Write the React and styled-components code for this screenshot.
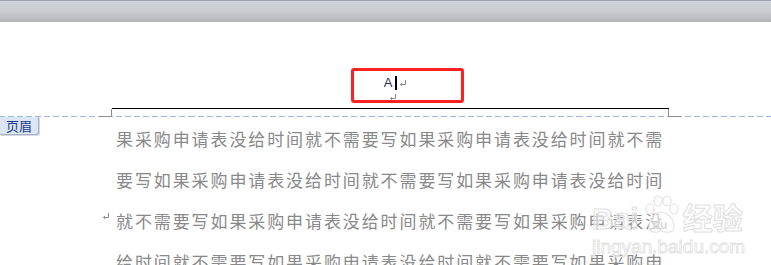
import React from "react";
import styled, { createGlobalStyle } from "styled-components";

const GlobalStyle = createGlobalStyle`
  html, body {
    margin: 0;
    padding: 0;
    background: #ffffff;
    overflow: hidden;
  }
  body {
    font-family: "Noto Sans CJK SC", "Liberation Sans", sans-serif;
  }
`;

const lines = [
  "果采购申请表没给时间就不需要写如果采购申请表没给时间就不需",
  "要写如果采购申请表没给时间就不需要写如果采购申请表没给时间",
  "就不需要写如果采购申请表没给时间就不需要写如果采购申请表没",
  "给时间就不需要写如果采购申请表没给时间就不需要写如果采购申",
];

const ReturnMark = ({ color = "#8a8a8a" }) => (
  <svg width="8" height="7" viewBox="0 0 8 7">
    <path d="M6.5 0 V4.5 H1.5" fill="none" stroke={color} strokeWidth="1" />
    <path d="M1 4.5 L3 2.8 V6.2 Z" fill={color} />
  </svg>
);

const App = () => {
  return (
    <>
      <GlobalStyle />
      <Page>
        <TopBar />
        <HeaderZone>
          <HeaderBox>
            <HeaderLine>
              <HeaderChar>A</HeaderChar>
              <Caret />
              <ReturnMark />
            </HeaderLine>
            <HeaderLine>
              <ReturnMark />
            </HeaderLine>
          </HeaderBox>
          <Highlight />
        </HeaderZone>
        <Divider>
          <CornerTick $side="left" />
          <CornerTick $side="right" />
        </Divider>
        <Body>
          <HeaderTag>页眉</HeaderTag>
          {lines.map((text, i) => (
            <Line key={i}>
              <Gutter>{i === 2 && <ReturnMark />}</Gutter>
              <LineText>{text}</LineText>
            </Line>
          ))}
          <Watermark>
            <LogoRow>
              <LogoWord>Bai</LogoWord>
              <Paw>
                <svg width="40" height="40" viewBox="0 0 40 40">
                  <g fill="rgba(255,255,255,0.55)" stroke="#e3e3e3" strokeWidth="1.2">
                    <ellipse cx="9" cy="14" rx="4" ry="5" />
                    <ellipse cx="17" cy="6" rx="4" ry="5" />
                    <ellipse cx="26" cy="6" rx="4" ry="5" />
                    <ellipse cx="33" cy="14" rx="4" ry="5" />
                    <path d="M8 32 C8 22 16 17 20 17 C25 17 33 22 33 32 C33 38 26 38 20 36 C14 38 8 38 8 32 Z" />
                  </g>
                </svg>
                <PawText>du</PawText>
              </Paw>
              <LogoWord>经验</LogoWord>
            </LogoRow>
            <LogoUrl>jingyan.baidu.com</LogoUrl>
          </Watermark>
        </Body>
      </Page>
    </>
  );
};

const Page = styled.div`
  width: 771px;
  height: 265px;
  overflow: hidden;
  background: #ffffff;
`;

const TopBar = styled.div`
  height: 21px;
  border-top: 1px solid #9aa1af;
  background: linear-gradient(to bottom, #d0d3d9 0%, #cbced3 45%, #b2b4b8 100%);
`;

const HeaderZone = styled.div`
  position: relative;
  margin-left: 112px;
  width: 557px;
  height: 86px;
  border-bottom: 1px solid #000000;
  display: flex;
  flex-direction: column;
  justify-content: flex-end;
`;

const HeaderBox = styled.div`
  display: flex;
  flex-direction: column;
  align-items: center;
  padding-bottom: 7px;
  padding-left: 10px;
`;

const HeaderLine = styled.div`
  display: flex;
  align-items: center;
  height: 16px;
  gap: 1px;
  &:first-child {
    margin-bottom: 2px;
  }
  &:last-child {
    height: 8px;
    margin-left: -6px;
  }
`;

const HeaderChar = styled.span`
  font-family: "Liberation Sans", Arial, sans-serif;
  font-size: 13px;
  color: #24305e;
  line-height: 14px;
`;

const Caret = styled.span`
  display: inline-block;
  width: 2px;
  height: 14px;
  background: #000000;
  margin: 0 1px 0 2px;
`;

const Highlight = styled.div`
  position: absolute;
  left: 239px;
  top: 46px;
  width: 107px;
  height: 29px;
  border: 3px solid #fb2222;
  border-radius: 3px;
  pointer-events: none;
`;

const Divider = styled.div`
  position: relative;
  height: 7px;
  border-bottom: 1px dashed #9db7df;
  border-image: repeating-linear-gradient(
      to right,
      #9db7df 0,
      #9db7df 6px,
      transparent 6px,
      transparent 9px
    )
    1;
`;

const CornerTick = styled.span`
  position: absolute;
  top: 0;
  bottom: -1px;
  left: ${(p) => (p.$side === "left" ? "112px" : "668px")};
  width: 12px;
  border-left: 1px solid #8c8c8c;
  border-bottom: 1px solid #8c8c8c;
  ${(p) => p.$side === "left" && "transform: scaleX(-1); transform-origin: left;"}
`;

const Body = styled.div`
  position: relative;
  padding-top: 1px;
`;

const HeaderTag = styled.div`
  position: absolute;
  left: 0;
  top: 0;
  width: 38px;
  height: 17px;
  background: #dbe5f3;
  border: 1px solid #a7b1bf;
  border-top: none;
  border-left: none;
  border-radius: 0 0 3px 0;
  box-shadow: 1px 1px 0 #d4d8de;
  color: #183a86;
  font-size: 13px;
  line-height: 17px;
  text-align: center;
`;

const Line = styled.div`
  display: flex;
  align-items: center;
  height: 41px;
`;

const Gutter = styled.div`
  width: 116px;
  flex: none;
  display: flex;
  justify-content: flex-end;
  padding-right: 6px;
  box-sizing: border-box;
  margin-top: -8px;
`;

const LineText = styled.div`
  white-space: nowrap;
  font-size: 17px;
  letter-spacing: 1.9px;
  color: #898989;
  line-height: 41px;
`;

const Watermark = styled.div`
  position: absolute;
  left: 592px;
  top: 78px;
  display: flex;
  flex-direction: column;
  align-items: flex-start;
  pointer-events: none;
`;

const LogoRow = styled.div`
  display: flex;
  align-items: flex-end;
`;

const LogoWord = styled.span`
  font-family: "Liberation Sans", "Noto Sans CJK SC", sans-serif;
  font-weight: bold;
  font-size: 30px;
  line-height: 32px;
  color: rgba(255, 255, 255, 0.55);
  -webkit-text-stroke: 1px #e0e0e0;
`;

const Paw = styled.span`
  position: relative;
  display: inline-flex;
  width: 40px;
  height: 40px;
  margin: 0 2px;
`;

const PawText = styled.span`
  position: absolute;
  left: 12px;
  bottom: 3px;
  font-family: "Liberation Sans", sans-serif;
  font-size: 12px;
  font-weight: bold;
  color: #dadada;
`;

const LogoUrl = styled.span`
  font-family: "Liberation Sans", sans-serif;
  font-size: 19px;
  line-height: 20px;
  color: rgba(255, 255, 255, 0.6);
  -webkit-text-stroke: 0.8px #e0e0e0;
  margin-top: 2px;
`;

export default App;
